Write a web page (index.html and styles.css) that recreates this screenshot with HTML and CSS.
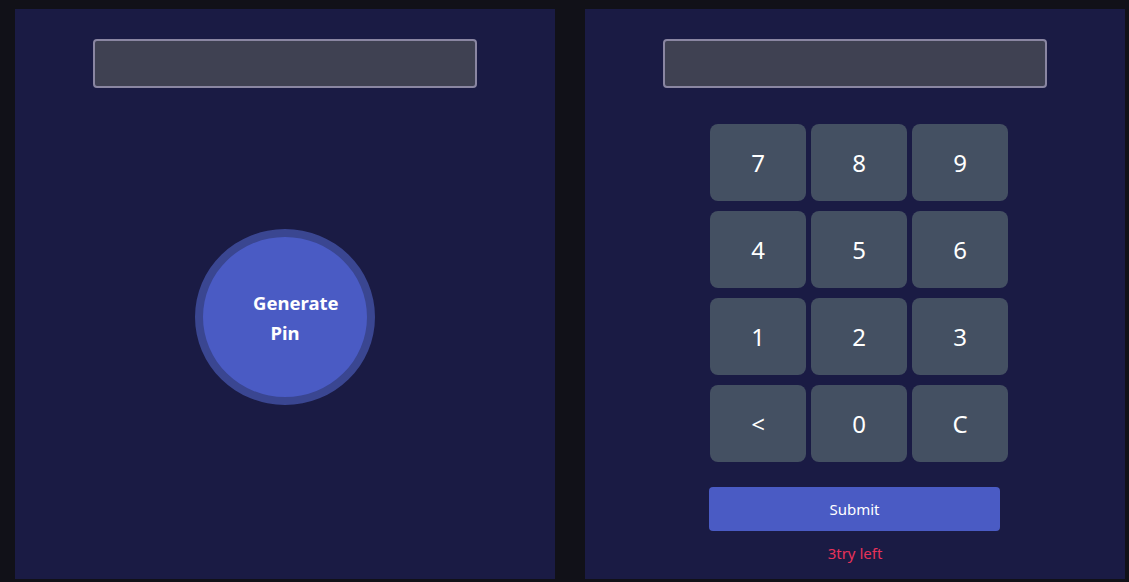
FILE: index.html
```html
<!DOCTYPE html>
<html>
<head>
<meta charset="utf-8">
<link rel="stylesheet" href="styles.css">
</head>
<body>
<div class="page">
  <section class="panel panel-generate">
    <input class="display" type="text" readonly>
    <button class="generate-btn">Generate Pin</button>
  </section>
  <section class="panel panel-pad">
    <input class="display" type="text" readonly>
    <div class="keypad">
      <button class="key">7</button>
      <button class="key">8</button>
      <button class="key">9</button>
      <button class="key">4</button>
      <button class="key">5</button>
      <button class="key">6</button>
      <button class="key">1</button>
      <button class="key">2</button>
      <button class="key">3</button>
      <button class="key">&lt;</button>
      <button class="key">0</button>
      <button class="key">C</button>
    </div>
    <button class="submit-btn">Submit</button>
    <p class="tries">3try left</p>
  </section>
</div>
</body>
</html>
```

FILE: styles.css
```css
html, body {
  margin: 0;
  padding: 0;
  background: #111118;
  font-family: "Noto Sans", "Open Sans", sans-serif;
}

.page {
  display: flex;
  gap: 30px;
  padding: 9px 4px 3px 15px;
  height: 570px;
}

.panel {
  width: 540px;
  height: 570px;
  background: #1a1b44;
  display: flex;
  flex-direction: column;
  align-items: center;
  box-sizing: border-box;
  padding-top: 30px;
}

.display {
  width: 384px;
  height: 49px;
  box-sizing: border-box;
  background: #3f4152;
  border: 2px solid #8a86a2;
  border-radius: 4px;
  outline: none;
  margin: 0;
}

.generate-btn {
  margin-top: 141px;
  width: 180px;
  height: 176px;
  border-radius: 50%;
  border: 8px solid #3a4691;
  background: #4a5bc4;
  color: #ffffff;
  font-family: inherit;
  font-weight: 700;
  font-size: 18.5px;
  line-height: 30px;
  text-align: center;
  text-indent: 20px;
  padding: 2px 30px 0;
  box-sizing: border-box;
}

.keypad {
  margin-top: 36px;
  display: grid;
  grid-template-columns: repeat(3, 96px);
  grid-auto-rows: 77px;
  column-gap: 5px;
  row-gap: 10px;
  align-self: flex-start;
  margin-left: 125px;
}

.key {
  background: #445062;
  border: none;
  border-radius: 8px;
  color: #ffffff;
  font-family: inherit;
  font-size: 24px;
  padding: 0;
}

.submit-btn {
  margin-top: 25px;
  margin-right: 1px;
  width: 291px;
  height: 44px;
  background: #4a5bc4;
  border: none;
  border-radius: 4px;
  color: #ffffff;
  font-family: inherit;
  font-size: 15px;
  padding: 0;
}

.tries {
  margin: 11px 0 0;
  color: #e8325a;
  font-size: 15px;
  line-height: 22px;
}
```
